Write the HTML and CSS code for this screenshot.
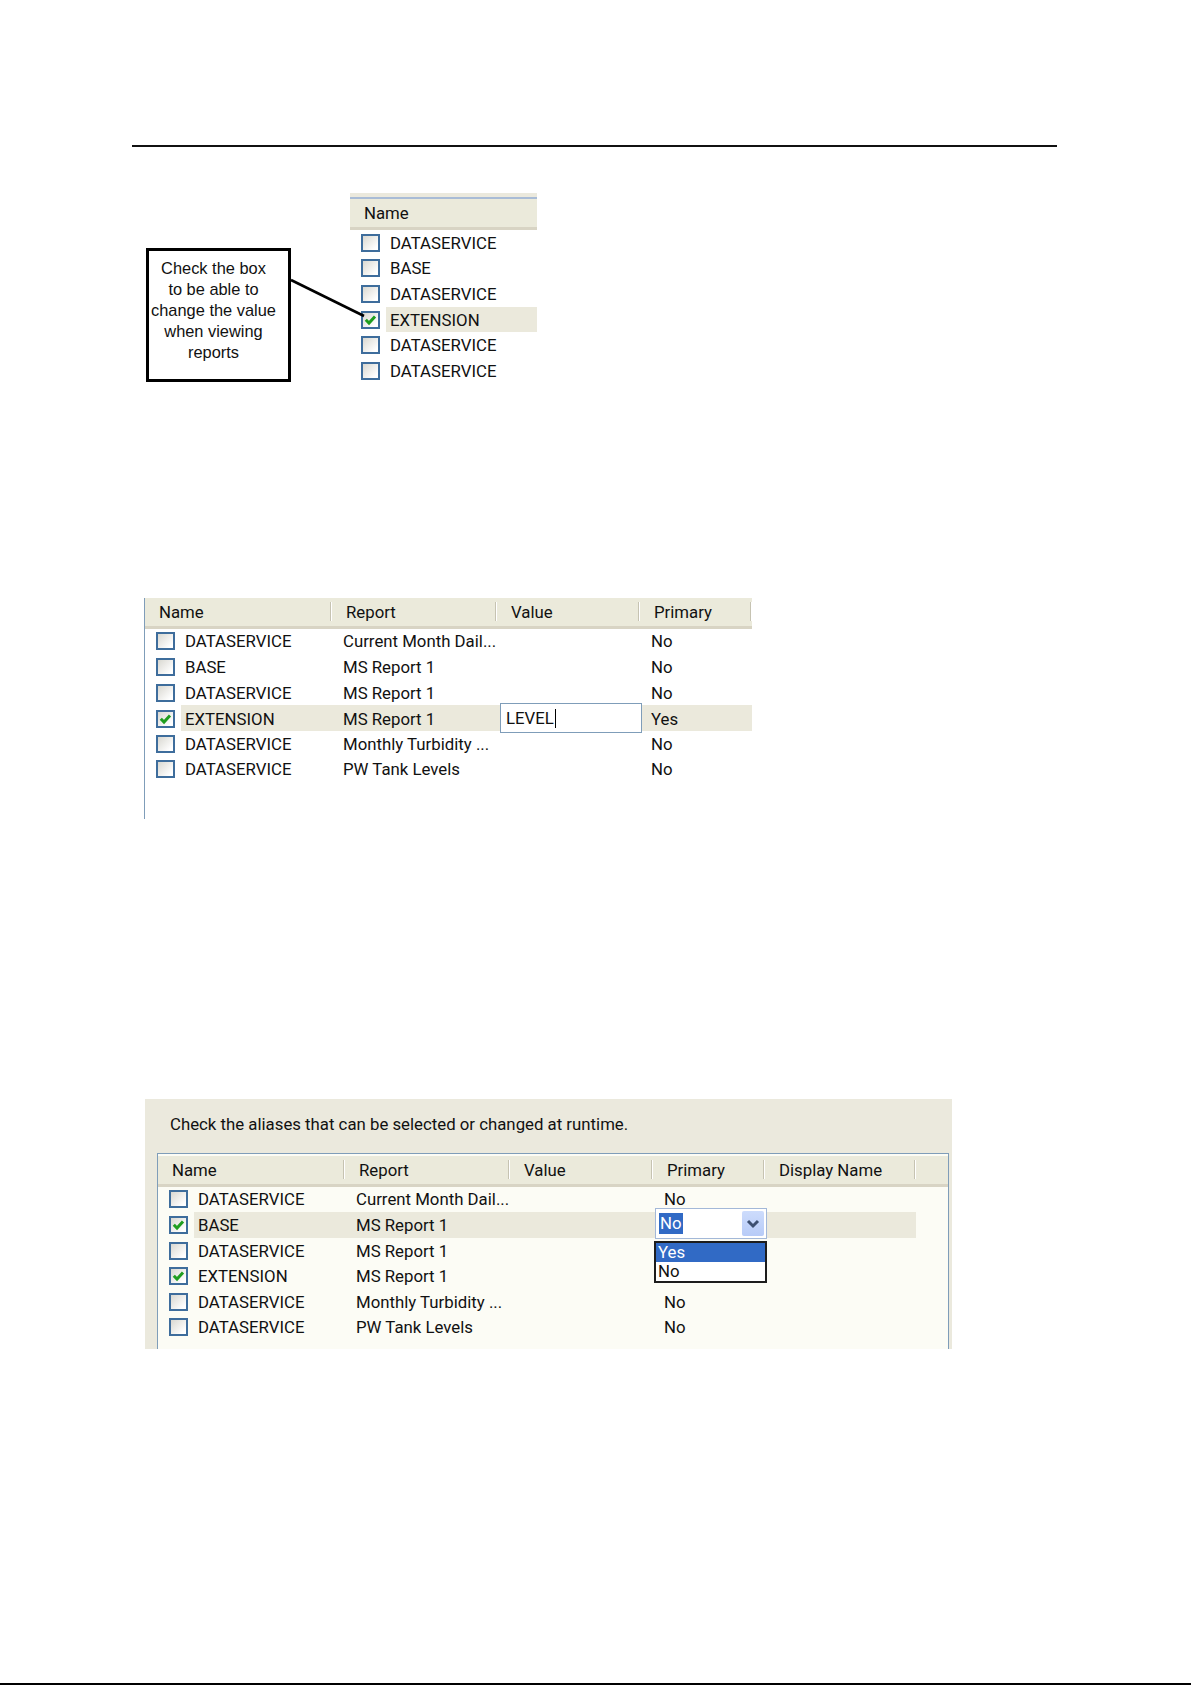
FILE: index.html
```html
<!DOCTYPE html>
<html lang="en">
<head>
    <meta charset="UTF-8">
    <title>Report aliases</title>
    <link rel="stylesheet" href="styles.css">
</head>
<body>
<div class="page">
    <div class="top-rule"></div>

    <!-- figure 1: callout pointing at the checkbox -->
    <div class="fig-callout">
        <div class="callout">Check the box<br>to be able to<br>change the value<br>when viewing<br>reports</div>
        <div class="lv lv-single">
            <div class="lv-head"><div class="hc hc-last">Name</div></div>
            <div class="lv-row"><div class="c-name"><span class="cb"></span>DATASERVICE</div></div>
            <div class="lv-row"><div class="c-name"><span class="cb"></span>BASE</div></div>
            <div class="lv-row"><div class="c-name"><span class="cb"></span>DATASERVICE</div></div>
            <div class="lv-row sel"><div class="c-name"><span class="cb"><svg viewBox="0 0 15 14"><polyline points="2.8,6.8 6,10 12,3.5"/></svg></span>EXTENSION</div></div>
            <div class="lv-row"><div class="c-name"><span class="cb"></span>DATASERVICE</div></div>
            <div class="lv-row"><div class="c-name"><span class="cb"></span>DATASERVICE</div></div>
        </div>
        <svg class="connector" width="85" height="50" viewBox="0 0 85 50"><line x1="5" y1="7" x2="78" y2="43"/></svg>
    </div>

    <!-- figure 2: editing the value -->
    <div class="lv lv-plain">
        <div class="lv-head">
            <div class="hc">Name</div>
            <div class="hc">Report</div>
            <div class="hc">Value</div>
            <div class="hc">Primary</div>
        </div>
        <div class="lv-row">
            <div class="c-name"><span class="cb"></span>DATASERVICE</div>
            <div class="c">Current Month Dail...</div>
            <div class="c"></div>
            <div class="c">No</div>
        </div>
        <div class="lv-row">
            <div class="c-name"><span class="cb"></span>BASE</div>
            <div class="c">MS Report 1</div>
            <div class="c"></div>
            <div class="c">No</div>
        </div>
        <div class="lv-row">
            <div class="c-name"><span class="cb"></span>DATASERVICE</div>
            <div class="c">MS Report 1</div>
            <div class="c"></div>
            <div class="c">No</div>
        </div>
        <div class="lv-row sel">
            <div class="c-name"><span class="cb"><svg viewBox="0 0 15 14"><polyline points="2.8,6.8 6,10 12,3.5"/></svg></span>EXTENSION</div>
            <div class="c">MS Report 1</div>
            <div class="edit">LEVEL<span class="caret"></span></div>
            <div class="c">Yes</div>
        </div>
        <div class="lv-row">
            <div class="c-name"><span class="cb"></span>DATASERVICE</div>
            <div class="c">Monthly Turbidity ...</div>
            <div class="c"></div>
            <div class="c">No</div>
        </div>
        <div class="lv-row">
            <div class="c-name"><span class="cb"></span>DATASERVICE</div>
            <div class="c">PW Tank Levels</div>
            <div class="c"></div>
            <div class="c">No</div>
        </div>
    </div>

    <!-- figure 3: picking the primary value -->
    <div class="dialog">
        <p class="dialog-text">Check the aliases that can be selected or changed at runtime.</p>
        <div class="lv lv-boxed">
            <div class="lv-head">
                <div class="hc">Name</div>
                <div class="hc">Report</div>
                <div class="hc">Value</div>
                <div class="hc">Primary</div>
                <div class="hc">Display Name</div>
                <div class="hc-fill"></div>
            </div>
            <div class="lv-row">
                <div class="c-name"><span class="cb"></span>DATASERVICE</div>
                <div class="c">Current Month Dail...</div>
                <div class="c"></div>
                <div class="c">No</div>
                <div class="c"></div>
            </div>
            <div class="lv-row sel">
                <div class="c-name"><span class="cb"><svg viewBox="0 0 15 14"><polyline points="2.8,6.8 6,10 12,3.5"/></svg></span>BASE</div>
                <div class="c">MS Report 1</div>
                <div class="c"></div>
                <div class="c-combo">
                    <div class="combo">
                        <span class="combo-sel">No</span>
                        <span class="combo-btn"><svg viewBox="0 0 22 25"><polyline points="6,10 11,15 16,10"/></svg></span>
                    </div>
                    <div class="dropdown">
                        <div class="opt opt-hi">Yes</div>
                        <div class="opt">No</div>
                    </div>
                </div>
                <div class="c"></div>
            </div>
            <div class="lv-row">
                <div class="c-name"><span class="cb"></span>DATASERVICE</div>
                <div class="c">MS Report 1</div>
                <div class="c"></div>
                <div class="c"></div>
                <div class="c"></div>
            </div>
            <div class="lv-row">
                <div class="c-name"><span class="cb"><svg viewBox="0 0 15 14"><polyline points="2.8,6.8 6,10 12,3.5"/></svg></span>EXTENSION</div>
                <div class="c">MS Report 1</div>
                <div class="c"></div>
                <div class="c"></div>
                <div class="c"></div>
            </div>
            <div class="lv-row">
                <div class="c-name"><span class="cb"></span>DATASERVICE</div>
                <div class="c">Monthly Turbidity ...</div>
                <div class="c"></div>
                <div class="c">No</div>
                <div class="c"></div>
            </div>
            <div class="lv-row">
                <div class="c-name"><span class="cb"></span>DATASERVICE</div>
                <div class="c">PW Tank Levels</div>
                <div class="c"></div>
                <div class="c">No</div>
                <div class="c"></div>
            </div>
        </div>
    </div>

    <div class="page-foot"></div>
</div>
</body>
</html>
```

FILE: styles.css
```css
body {
    margin: 0;
    font-family: Roboto, "Liberation Sans", sans-serif;
    font-size: 16.8px;
    color: #111;
    background: #fff;
}

.page {
    min-height: 1685px;
    display: flex;
    flex-direction: column;
    align-items: flex-start;
}

.top-rule {
    margin: 145px 0 0 132px;
    width: 925px;
    height: 2px;
    background: #111;
}

.page-foot {
    margin-top: auto;
    align-self: stretch;
    height: 2px;
    background: #000;
}

/* figure 1 */
.fig-callout {
    position: relative;
    display: flex;
    align-items: flex-start;
    gap: 59px;
    margin: 46px 0 0 146px;
}

.callout {
    box-sizing: border-box;
    width: 145px;
    height: 134px;
    margin-top: 55px;
    padding: 7px 10px 0 0;
    border: 3px solid #000;
    background: #fff;
    font-family: "Liberation Sans", Arial, sans-serif;
    font-size: 16.4px;
    line-height: 21px;
    text-align: center;
}

.connector {
    position: absolute;
    left: 140px;
    top: 80px;
}

.connector line {
    stroke: #000;
    stroke-width: 2.6;
}

/* list views */
.lv {
    --cols: 187px;
}

.lv-head {
    display: grid;
    grid-template-columns: var(--cols);
    height: 28px;
    background: #ebeadb;
    border-bottom: 3px solid #d8d4c4;
}

.hc {
    display: flex;
    align-items: center;
    padding-left: 14px;
    white-space: nowrap;
    background: linear-gradient(to right, #c6c3b2 0 1px, #fff 1px 2px) no-repeat right center / 2px 19px;
}

.hc-last {
    background: none;
}

.lv-row {
    display: grid;
    grid-template-columns: var(--cols);
    width: fit-content;
    height: 25.6px;
    align-items: center;
}

.lv-row.sel {
    background: linear-gradient(#ebe9dc, #ebe9dc) no-repeat 36px 0 / calc(100% - 36px) 100%;
}

.c {
    padding-left: 11px;
    white-space: nowrap;
}

.c-name {
    display: flex;
    align-items: center;
    padding-left: 11px;
    white-space: nowrap;
}

.cb {
    box-sizing: border-box;
    flex: none;
    display: flex;
    width: 19px;
    height: 18px;
    margin-right: 10px;
    border: 2px solid #3e6d9c;
    background: linear-gradient(135deg, #d9d8d1, #fff 85%);
}

.cb svg {
    width: 100%;
    height: 100%;
}

.cb polyline {
    fill: none;
    stroke: #1f9e1f;
    stroke-width: 3;
}

.lv-single {
    width: 187px;
    border-top: 4px solid #ebe9dd;
}

.lv-single .lv-head {
    border-top: 2px solid #a9bcd6;
}

.lv-plain {
    --cols: 187px 165px 143px 112px;
    margin: 214px 0 0 144px;
    width: 607px;
    height: 221px;
    border-left: 1px solid #7f9db9;
}

.edit {
    box-sizing: border-box;
    align-self: start;
    display: flex;
    align-items: center;
    width: 142px;
    height: 30px;
    margin: -2px 0 0 3px;
    padding-left: 5px;
    border: 1px solid #7f9db9;
    background: #fff;
}

.caret {
    display: inline-block;
    width: 1px;
    height: 19px;
    margin-left: 1px;
    background: #000;
}

/* figure 3 */
.dialog {
    box-sizing: border-box;
    margin: 280px 0 0 145px;
    width: 807px;
    height: 250px;
    padding: 15px 3px 0 12px;
    background: #ebe9dd;
    overflow: hidden;
}

.dialog-text {
    margin: 0 0 19px;
    padding-left: 13px;
    line-height: 20px;
}

.lv-boxed {
    --cols: 187px 165px 143px 112px 151px;
    height: 210px;
    padding-top: 2px;
    border: 1px solid #7f9db9;
    border-bottom: none;
    background: #fcfcf5;
}

.lv-boxed .lv-head {
    grid-template-columns: var(--cols) 1fr;
}

.c-combo {
    position: relative;
    align-self: start;
    height: 25.6px;
}

.combo {
    box-sizing: border-box;
    display: flex;
    align-items: center;
    width: 112px;
    height: 31px;
    margin: -4.6px 0 0 2px;
    padding: 0 2px 0 3px;
    border: 1px solid #a3b8d8;
    background: #fff;
}

.combo-sel {
    padding: 1px 1px;
    line-height: 19px;
    background: #316ac5;
    color: #fff;
}

.combo-btn {
    display: flex;
    width: 22px;
    height: 25px;
    margin-left: auto;
    border-radius: 2px;
    background: linear-gradient(#cddcfc, #b7cbf7);
}

.combo-btn svg {
    width: 100%;
    height: 100%;
}

.combo-btn polyline {
    fill: none;
    stroke: #3d4f70;
    stroke-width: 3;
}

.dropdown {
    position: absolute;
    left: 1px;
    top: 28.4px;
    box-sizing: border-box;
    width: 113px;
    height: 42px;
    border: 2px solid #1d1d1d;
    background: #fff;
}

.opt {
    height: 19px;
    padding-left: 2px;
    line-height: 19px;
}

.opt-hi {
    background: #316ac5;
    color: #fff;
}
```
